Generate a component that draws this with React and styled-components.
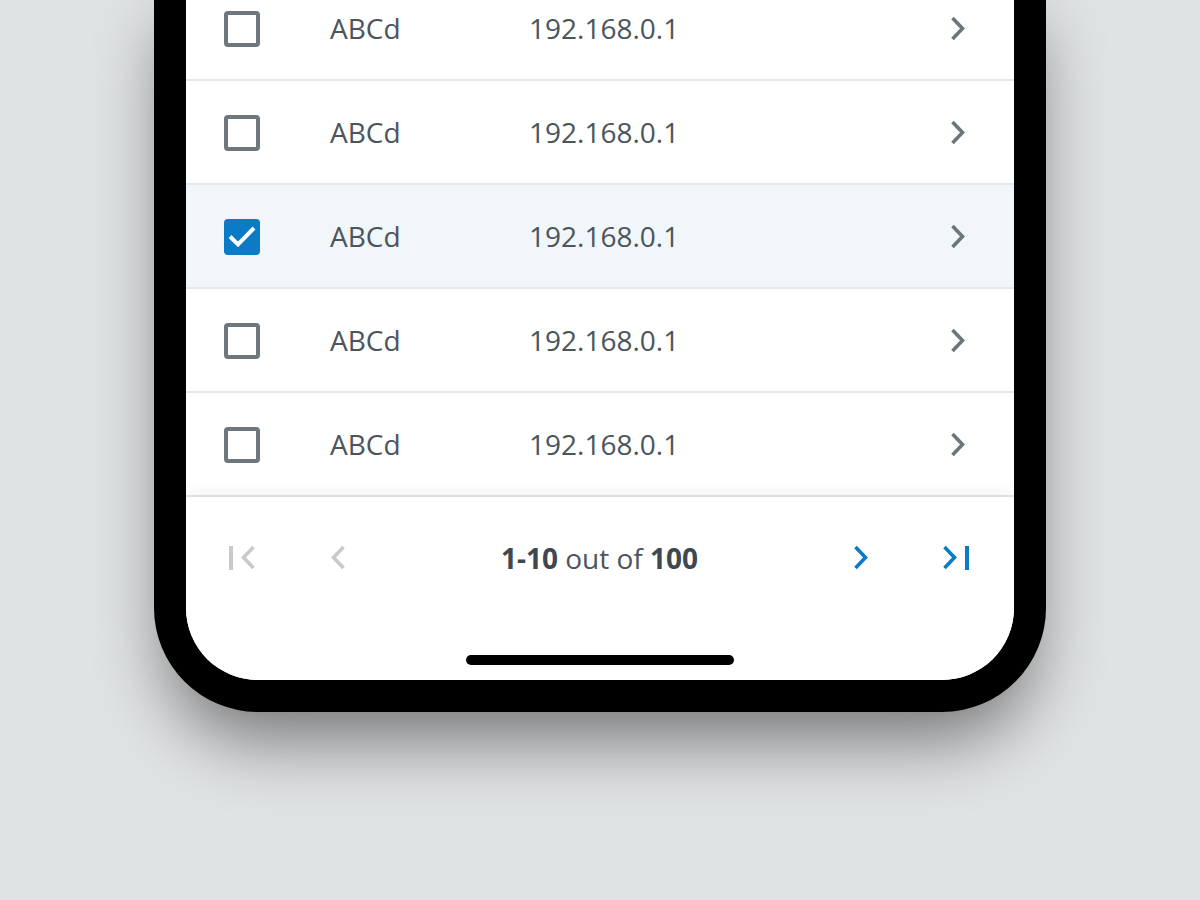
import React from "react";
import styled, { createGlobalStyle } from "styled-components";

const GlobalStyle = createGlobalStyle`
  html, body {
    margin: 0;
    padding: 0;
    background: #e0e3e4;
  }
  body {
    font-family: "Open Sans", "Noto Sans", sans-serif;
  }
`;

const rows = [
  { name: "ABCd", ip: "192.168.0.1", checked: false },
  { name: "ABCd", ip: "192.168.0.1", checked: false },
  { name: "ABCd", ip: "192.168.0.1", checked: true },
  { name: "ABCd", ip: "192.168.0.1", checked: false },
  { name: "ABCd", ip: "192.168.0.1", checked: false },
];

const Chevron = ({ dir = "right", color }) => (
  <svg width="16" height="26" viewBox="0 0 16 26" fill="none">
    <polyline
      points={dir === "right" ? "2.5,2 12.5,12.5 2.5,23" : "13.5,2 3.5,12.5 13.5,23"}
      stroke={color}
      strokeWidth="3.6"
      strokeLinejoin="miter"
    />
  </svg>
);

const EdgeChevron = ({ dir, color }) => (
  <svg width="30" height="26" viewBox="0 0 30 26" fill="none">
    {dir === "first" ? (
      <>
        <rect x="2" y="1" width="4" height="24" fill={color} />
        <polyline points="26.5,2 16.5,12.5 26.5,23" stroke={color} strokeWidth="3.6" />
      </>
    ) : (
      <>
        <polyline points="2.5,2 12.5,12.5 2.5,23" stroke={color} strokeWidth="3.6" />
        <rect x="23" y="1" width="4" height="24" fill={color} />
      </>
    )}
  </svg>
);

const App = () => {
  return (
    <Page>
      <GlobalStyle />
      <Phone>
        <Screen>
          <List>
            {rows.map((r, i) => (
              <Row key={i} $selected={r.checked}>
                <Checkbox $checked={r.checked}>
                  {r.checked && (
                    <svg width="36" height="36" viewBox="0 0 36 36" fill="none">
                      <polyline
                        points="6,17.5 14,25.5 30,9"
                        stroke="#fff"
                        strokeWidth="4"
                      />
                    </svg>
                  )}
                </Checkbox>
                <Name>{r.name}</Name>
                <Ip>{r.ip}</Ip>
                <RowArrow>
                  <Chevron dir="right" color="#6b767c" />
                </RowArrow>
              </Row>
            ))}
          </List>
          <Footer>
            <Pager>
              <PagerGroup>
                <PageButton>
                  <EdgeChevron dir="first" color="#c6cacd" />
                </PageButton>
                <PageButton>
                  <Chevron dir="left" color="#c6cacd" />
                </PageButton>
              </PagerGroup>
              <PageInfo>
                <strong>1-10</strong> out of <strong>100</strong>
              </PageInfo>
              <PagerGroup>
                <PageButton>
                  <Chevron dir="right" color="#0a7bc4" />
                </PageButton>
                <PageButton>
                  <EdgeChevron dir="last" color="#0a7bc4" />
                </PageButton>
              </PagerGroup>
            </Pager>
            <HomeBar />
          </Footer>
        </Screen>
      </Phone>
    </Page>
  );
};

export default App;

const Page = styled.div`
  width: 100%;
  height: 900px;
  overflow: hidden;
  display: flex;
  justify-content: center;
  align-items: flex-start;
  background: #e0e3e4;
`;

const Phone = styled.div`
  width: 892px;
  box-sizing: border-box;
  margin-top: -23px;
  padding: 0 32px 32px;
  background: #000;
  border-radius: 0 0 104px 104px;
  box-shadow: 0 40px 70px -12px rgba(0, 0, 0, 0.48);
`;

const Screen = styled.div`
  background: #fff;
  border-radius: 0 0 72px 72px;
  overflow: hidden;
  display: flex;
  flex-direction: column;
`;

const List = styled.div`
  display: flex;
  flex-direction: column;
`;

const Row = styled.div`
  height: 104px;
  box-sizing: border-box;
  display: flex;
  align-items: center;
  padding: 0 48px 0 38px;
  border-bottom: 2px solid #e6e8ea;
  background: ${(p) => (p.$selected ? "#f1f6fa" : "#fff")};
`;

const Checkbox = styled.div`
  width: 36px;
  height: 36px;
  box-sizing: border-box;
  flex-shrink: 0;
  border-radius: 4px;
  border: ${(p) => (p.$checked ? "none" : "4px solid #6d777d")};
  background: ${(p) => (p.$checked ? "#0a7bc4" : "#fff")};
  display: flex;
  align-items: center;
  justify-content: center;
  margin-top: 2px;
`;

const Name = styled.div`
  margin-left: 70px;
  width: 199px;
  font-size: 28px;
  color: #4b555b;
  line-height: 1;
`;

const Ip = styled.div`
  flex: 1;
  font-size: 28px;
  color: #4b555b;
  line-height: 1;
`;

const RowArrow = styled.div`
  display: flex;
  align-items: center;
  margin-top: 2px;
`;

const Footer = styled.div`
  position: relative;
  z-index: 1;
  background: #fff;
  height: 183px;
  display: flex;
  flex-direction: column;
  box-shadow: 0 -4px 14px rgba(0, 0, 0, 0.06);
`;

const Pager = styled.div`
  height: 122px;
  display: flex;
  align-items: center;
  padding: 0 25px 0 24px;
`;

const PagerGroup = styled.div`
  display: flex;
  gap: 32px;
`;

const PageButton = styled.div`
  width: 64px;
  height: 48px;
  display: flex;
  align-items: center;
  justify-content: center;
`;

const PageInfo = styled.div`
  flex: 1;
  text-align: center;
  font-size: 28px;
  color: #4b555b;

  strong {
    font-weight: 700;
    color: #3e484e;
  }
`;

const HomeBar = styled.div`
  width: 268px;
  height: 10px;
  border-radius: 5px;
  background: #000;
  margin: 36px auto 0;
`;
